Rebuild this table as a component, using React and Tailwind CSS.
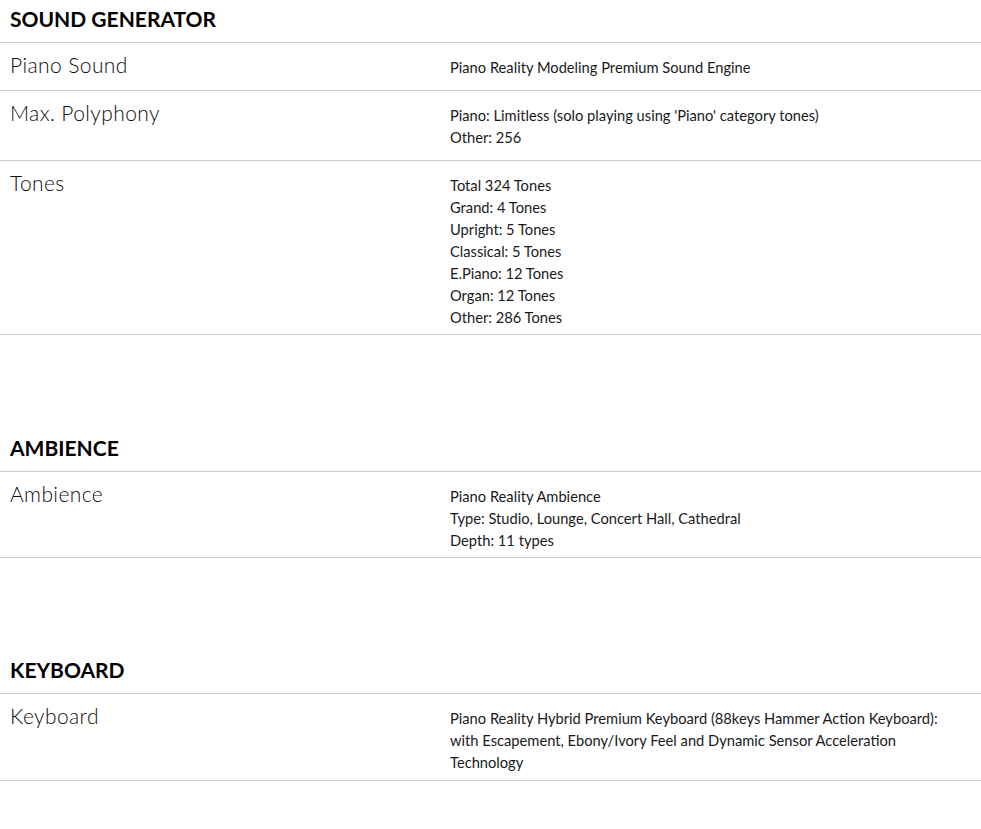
const sections = [
  {
    title: "SOUND GENERATOR",
    mt: "",
    rows: [
      { label: "Piano Sound", pb: "pb-[12px]", lines: ["Piano Reality Modeling Premium Sound Engine"] },
      {
        label: "Max. Polyphony",
        pb: "pb-[12px]",
        lines: ["Piano: Limitless (solo playing using 'Piano' category tones)", "Other: 256"],
      },
      {
        label: "Tones",
        pb: "pb-[6px]",
        lines: [
          "Total 324 Tones",
          "Grand: 4 Tones",
          "Upright: 5 Tones",
          "Classical: 5 Tones",
          "E.Piano: 12 Tones",
          "Organ: 12 Tones",
          "Other: 286 Tones",
        ],
      },
    ],
  },
  {
    title: "AMBIENCE",
    mt: "mt-[94px]",
    rows: [
      {
        label: "Ambience",
        pb: "pb-[6px]",
        lines: ["Piano Reality Ambience", "Type: Studio, Lounge, Concert Hall, Cathedral", "Depth: 11 types"],
      },
    ],
  },
  {
    title: "KEYBOARD",
    mt: "mt-[93px]",
    rows: [
      {
        label: "Keyboard",
        pb: "pb-[7px]",
        lines: [
          "Piano Reality Hybrid Premium Keyboard (88keys Hammer Action Keyboard): with Escapement, Ebony/Ivory Feel and Dynamic Sensor Acceleration Technology",
        ],
      },
    ],
  },
];

function SpecRow({ label, lines, pb }) {
  return (
    <div className="flex border-b border-[#cccccc]">
      <div className="w-[450px] shrink-0 pl-[10px] pt-[10px] text-[21px] leading-[24px] font-light tracking-[0.4px] text-[#0d0d0d]">
        {label}
      </div>
      <div className={`flex-1 pr-[31px] pt-[13px] ${pb} text-[14.7px] leading-[22px] text-[#1a1a1a]`}>
        {lines.map((l) => (
          <div key={l}>{l}</div>
        ))}
      </div>
    </div>
  );
}

export default function App() {
  return (
    <main className="min-h-screen w-full bg-white" style={{ fontFamily: "Lato, 'Open Sans', sans-serif" }}>
      {sections.map((s) => (
        <section key={s.title} className={s.mt}>
          <h2 className="border-b border-[#cccccc] pl-[10px] pt-[7px] pb-[11px] text-[21px] leading-[24px] font-bold text-[#000000]">
            {s.title}
          </h2>
          {s.rows.map((r) => (
            <SpecRow key={r.label} {...r} />
          ))}
        </section>
      ))}
    </main>
  );
}
